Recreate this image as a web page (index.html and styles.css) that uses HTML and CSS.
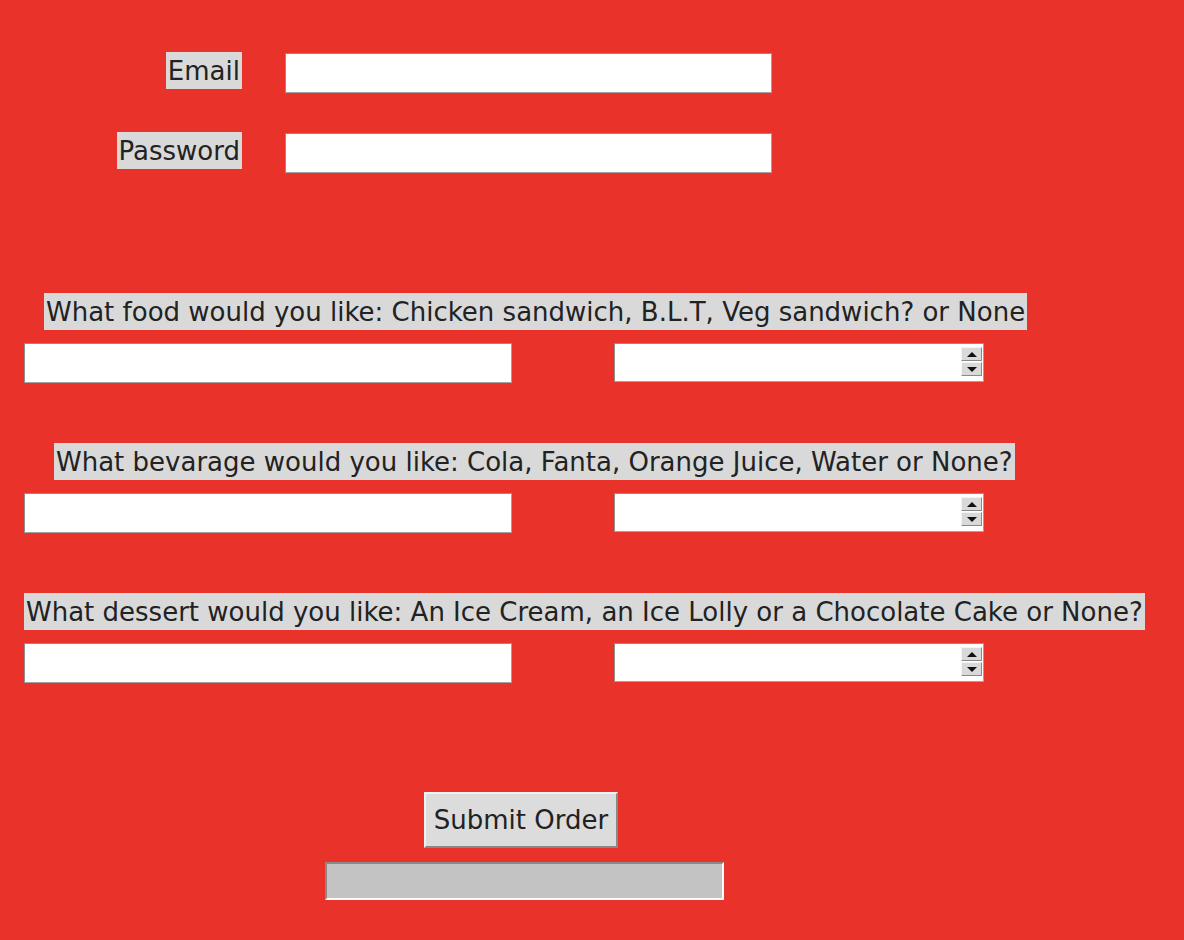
FILE: index.html
```html
<!DOCTYPE html>
<html lang="en">
<head>
<meta charset="utf-8">
<title>Order Form</title>
<link rel="stylesheet" href="styles.css">
</head>
<body>
<main class="app">
  <section class="login">
    <div class="field-row">
      <div class="field-label"><span class="tk-label">Email</span></div>
      <input class="entry entry-login" type="text">
    </div>
    <div class="field-row">
      <div class="field-label"><span class="tk-label">Password</span></div>
      <input class="entry entry-login" type="password">
    </div>
  </section>

  <section class="question q-food">
    <div class="tk-label qlabel">What food would you like: Chicken sandwich, B.L.T, Veg sandwich? or None</div>
    <div class="answer-row">
      <input class="entry entry-answer" type="text">
      <div class="spinbox">
        <div class="spin-field"></div>
        <div class="spin-buttons">
          <span class="spin-btn"><span class="tri-up"></span></span>
          <span class="spin-btn"><span class="tri-down"></span></span>
        </div>
      </div>
    </div>
  </section>

  <section class="question q-bev">
    <div class="tk-label qlabel">What bevarage would you like: Cola, Fanta, Orange Juice, Water or None?</div>
    <div class="answer-row">
      <input class="entry entry-answer" type="text">
      <div class="spinbox">
        <div class="spin-field"></div>
        <div class="spin-buttons">
          <span class="spin-btn"><span class="tri-up"></span></span>
          <span class="spin-btn"><span class="tri-down"></span></span>
        </div>
      </div>
    </div>
  </section>

  <section class="question q-dessert">
    <div class="tk-label qlabel">What dessert would you like: An Ice Cream, an Ice Lolly or a Chocolate Cake or None?</div>
    <div class="answer-row">
      <input class="entry entry-answer" type="text">
      <div class="spinbox">
        <div class="spin-field"></div>
        <div class="spin-buttons">
          <span class="spin-btn"><span class="tri-up"></span></span>
          <span class="spin-btn"><span class="tri-down"></span></span>
        </div>
      </div>
    </div>
  </section>

  <section class="actions">
    <button class="submit" type="button">Submit Order</button>
    <div class="status-bar"></div>
  </section>
</main>
</body>
</html>
```

FILE: styles.css
```css
html, body {
  margin: 0;
  padding: 0;
}

body {
  background: #e8322a;
  font-family: "DejaVu Sans", "Liberation Sans", sans-serif;
  font-size: 26px;
  color: #222;
  width: 1184px;
  height: 940px;
  overflow: hidden;
}

.app {
  display: flex;
  flex-direction: column;
  padding-top: 52px;
}

.tk-label {
  background: #d9d9d9;
  color: #222;
  line-height: 30px;
  padding: 4px 2px 3px 2px;
  white-space: nowrap;
}

/* Login section */
.login {
  display: flex;
  flex-direction: column;
  gap: 39px;
}

.field-row {
  display: flex;
  align-items: flex-start;
  gap: 43px;
}

.field-label {
  width: 242px;
  display: flex;
  justify-content: flex-end;
}

.entry {
  box-sizing: border-box;
  height: 40px;
  margin: 1px 0 0 0;
  padding: 0 4px;
  background: #fff;
  border: 1px solid #a2a2a2;
  border-top-color: #8e8e8e;
  border-left-color: #8e8e8e;
  outline: none;
  font: inherit;
}

.entry-login {
  width: 487px;
}

/* Questions */
.question {
  display: flex;
  flex-direction: column;
  align-items: flex-start;
  gap: 13px;
}

.q-food {
  margin-top: 120px;
}

.q-bev,
.q-dessert {
  margin-top: 60px;
}

.q-food .qlabel {
  margin-left: 44px;
}

.q-bev .qlabel {
  margin-left: 54px;
}

.q-dessert .qlabel {
  margin-left: 24px;
}

.answer-row {
  display: flex;
  align-items: flex-start;
  gap: 102px;
  padding-left: 24px;
}

.entry-answer {
  width: 488px;
  margin-top: 0;
}

.spinbox {
  box-sizing: border-box;
  width: 370px;
  height: 39px;
  background: #fff;
  border: 1px solid #a2a2a2;
  border-top-color: #8e8e8e;
  border-left-color: #8e8e8e;
  display: flex;
  padding: 3px 1px 5px 0;
}

.spin-field {
  flex: 1;
}

.spin-buttons {
  width: 21px;
  display: flex;
  flex-direction: column;
  gap: 1px;
}

.spin-btn {
  flex: 1;
  box-sizing: border-box;
  background: #d9d9d9;
  border: 1px solid;
  border-color: #f4f4f4 #8a8a8a #8a8a8a #f4f4f4;
  display: flex;
  align-items: center;
  justify-content: center;
}

.tri-up {
  width: 0;
  height: 0;
  border-left: 5px solid transparent;
  border-right: 5px solid transparent;
  border-bottom: 5px solid #111;
}

.tri-down {
  width: 0;
  height: 0;
  border-left: 5px solid transparent;
  border-right: 5px solid transparent;
  border-top: 5px solid #111;
}

/* Actions */
.actions {
  display: flex;
  flex-direction: column;
  margin-top: 109px;
}

.submit {
  align-self: flex-start;
  margin-left: 424px;
  box-sizing: border-box;
  width: 194px;
  height: 56px;
  background: #dcdcdc;
  border: 2px solid;
  border-color: #f2f2f2 #888 #888 #f2f2f2;
  font: inherit;
  color: #222;
  padding: 0 6px;
  text-align: center;
}

.status-bar {
  margin-top: 14px;
  margin-left: 325px;
  box-sizing: border-box;
  width: 399px;
  height: 38px;
  background: #c3c3c3;
  border: 2px solid;
  border-color: #8a8a8a #fbfbfb #fbfbfb #8a8a8a;
}
```
